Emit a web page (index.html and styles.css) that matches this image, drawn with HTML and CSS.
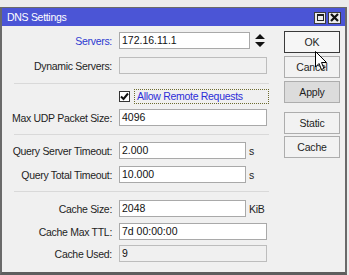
FILE: index.html
```html
<!DOCTYPE html>
<html>
<head>
<meta charset="utf-8">
<link rel="stylesheet" href="styles.css">
</head>
<body>
<div class="window">
  <div class="titlebar">
    <span class="title">DNS Settings</span>
    <div class="tbtns">
      <span class="tbtn tmax"><span class="sq"></span></span>
      <span class="tbtn tclose"><svg width="9" height="9" viewBox="0 0 9 9"><path d="M1 1 L8 8 M8 1 L1 8" stroke="#111" stroke-width="2.2"/></svg></span>
    </div>
  </div>
  <div class="content">
    <div class="form">
      <div class="row">
        <label class="lbl blue">Servers:</label>
        <div class="field w-srv">172.16.11.1</div>
        <svg class="spin" width="10" height="13" viewBox="0 0 10 13"><path d="M5 0 L10 5 L0 5 Z M0 8 L10 8 L5 13 Z" fill="#111"/></svg>
      </div>
      <div class="row g8">
        <label class="lbl">Dynamic Servers:</label>
        <div class="field w-full disabled"></div>
      </div>
      <div class="sep s1"></div>
      <div class="row chkrow">
        <span class="chk"><svg width="9" height="9" viewBox="0 0 9 9"><path d="M1 4.5 L3.5 7 L8 1.5" fill="none" stroke="#111" stroke-width="2"/></svg></span>
        <span class="chklbl">Allow Remote Requests</span>
      </div>
      <div class="row g5">
        <label class="lbl">Max UDP Packet Size:</label>
        <div class="field w-full">4096</div>
      </div>
      <div class="sep s2"></div>
      <div class="row g7">
        <label class="lbl">Query Server Timeout:</label>
        <div class="field w-short">2.000</div>
        <span class="unit">s</span>
      </div>
      <div class="row g7">
        <label class="lbl">Query Total Timeout:</label>
        <div class="field w-short">10.000</div>
        <span class="unit">s</span>
      </div>
      <div class="sep s3"></div>
      <div class="row g8">
        <label class="lbl">Cache Size:</label>
        <div class="field w-short">2048</div>
        <span class="unit">KiB</span>
      </div>
      <div class="row g6">
        <label class="lbl">Cache Max TTL:</label>
        <div class="field w-full">7d 00:00:00</div>
      </div>
      <div class="row g5">
        <label class="lbl">Cache Used:</label>
        <div class="field w-full disabled">9</div>
      </div>
    </div>
    <div class="buttons">
      <button class="btn default">OK</button>
      <button class="btn b-cancel">Cancel</button>
      <button class="btn b-apply">Apply</button>
      <button class="btn b-static">Static</button>
      <button class="btn b-cache">Cache</button>
    </div>
  </div>
</div>
<svg class="cursor" width="13" height="20" viewBox="0 0 13 20"><path d="M0.5 0.5 L0.5 16 L4 12.5 L6.5 18.5 L9 17.5 L6.5 11.5 L11.5 11.5 Z" fill="#fff" stroke="#000" stroke-width="1"/></svg>
</body>
</html>
```
FILE: styles.css
```css
html, body {
  margin: 0;
  padding: 0;
}
body {
  background: #ececec;
  width: 349px;
  height: 275px;
  overflow: hidden;
  position: relative;
  font-family: "Liberation Sans", Arial, sans-serif;
  font-size: 10.5px;
  letter-spacing: -0.3px;
  color: #1e1e1e;
  padding-top: 7px;
  box-sizing: border-box;
}
.window {
  width: 347px;
  height: 268px;
  box-sizing: border-box;
  border: 2px solid #6a6a6a;
  border-top: 1px solid #6a6a6a;
  border-bottom: 3px solid #5e5e5e;
  background: #f0f0f0;
  display: flex;
  flex-direction: column;
}
.titlebar {
  height: 18px;
  background: #4b55d6;
  display: flex;
  align-items: center;
  justify-content: space-between;
  padding: 0 4px 0 5px;
  flex: none;
}
.title {
  color: #fff;
  font-size: 10.5px;
}
.tbtns {
  display: flex;
  gap: 2px;
  margin-top: 1px;
}
.tbtn {
  width: 12px;
  height: 12px;
  box-sizing: border-box;
  background: #ececec;
  border: 1px solid #3c3c3c;
  display: flex;
  align-items: center;
  justify-content: center;
}
.tclose { width: 13px; }
.sq {
  width: 7px;
  height: 7px;
  border: 1px solid #222;
  border-top-width: 2px;
  box-sizing: border-box;
}
.content {
  display: flex;
  flex: 1;
}
.form {
  width: 280px;
  padding-top: 6px;
  padding-left: 2px;
  box-sizing: border-box;
  display: flex;
  flex-direction: column;
}
.row {
  display: flex;
  align-items: center;
  height: 17px;
}
.g5 { margin-top: 5px; }
.g6 { margin-top: 6px; }
.g7 { margin-top: 7px; }
.g8 { margin-top: 8px; }
.lbl {
  width: 108px;
  text-align: right;
  margin-right: 7px;
  white-space: nowrap;
  flex: none;
}
.blue { color: #2d3bd0; }
.field {
  height: 17px;
  box-sizing: border-box;
  background: #fff;
  border: 1px solid #a9a9a9;
  font-size: 10.5px;
  letter-spacing: 0;
  line-height: 15px;
  padding-left: 2px;
  flex: none;
  color: #111;
}
.field.disabled {
  background: #f0f0f0;
  border-color: #bdbdbd;
}
.w-srv { width: 131px; }
.w-full { width: 148px; }
.w-short { width: 127px; }
.spin { margin-left: 5px; }
.unit {
  margin-left: 3px;
}
.sep {
  width: 255px;
  height: 1px;
  background: #d9d9d9;
  margin-left: 10px;
}
.s1 { margin-top: 9px; }
.s2 { margin-top: 8px; }
.s3 { margin-top: 8px; }
.chkrow {
  margin-top: 5px;
  height: 15px;
  padding-left: 115px;
}
.chk {
  width: 11px;
  height: 11px;
  box-sizing: border-box;
  border: 1px solid #333;
  background: #fff;
  display: flex;
  align-items: center;
  justify-content: center;
  margin-right: 4px;
}
.chklbl {
  color: #2d2dd8;
  border: 1px dotted #6d6b2e;
  height: 15px;
  box-sizing: border-box;
  width: 135px;
  line-height: 13px;
  padding-left: 2px;
}
.buttons {
  display: flex;
  flex-direction: column;
  padding-top: 5px;
  padding-left: 2px;
}
.btn {
  width: 56px;
  height: 22px;
  box-sizing: border-box;
  background: #f2f2f2;
  border: 1px solid #adadad;
  font-family: "Liberation Sans", Arial, sans-serif;
  font-size: 10.5px;
  letter-spacing: -0.2px;
  color: #1e1e1e;
  padding: 0;
}
.btn.default {
  border-color: #3a3a3a;
  background: #f6f6f6;
}
.b-cancel { margin-top: 3px; }
.b-apply { margin-top: 3px; background: #dcdcdc; }
.b-static { margin-top: 9px; }
.b-cache { margin-top: 2px; }
.cursor {
  position: absolute;
  left: 315px;
  top: 51px;
}
```
